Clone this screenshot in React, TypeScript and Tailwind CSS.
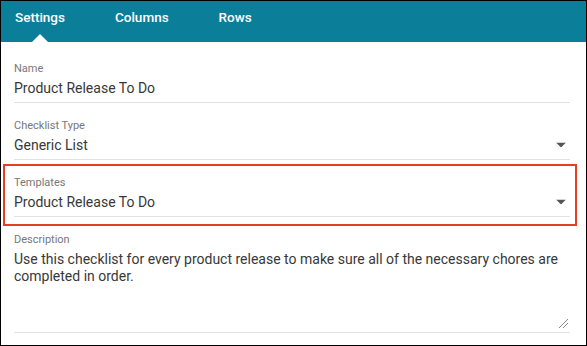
import React from "react";

const tabs = ["Settings", "Columns", "Rows"];

const Caret: React.FC = () => (
  <svg width="10" height="5" viewBox="0 0 10 5" className="absolute right-[4px] top-1/2 -translate-y-1/2">
    <path d="M0 0 L10 0 L5 5 Z" fill="#555" />
  </svg>
);

interface FieldProps {
  label: string;
  value: string;
  select?: boolean;
  highlight?: boolean;
}

const Field: React.FC<FieldProps> = ({ label, value, select, highlight }) => {
  return (
    <div className="relative pt-[16px] pb-[4px] border-b border-[#e2e2e2]">
      {highlight && (
        <div className="absolute top-[4px] bottom-[-10px] left-[-11px] right-[-7px] border-2 border-[#e2411d] pointer-events-none"></div>
      )}
      <div className="text-[11px] leading-[13px] text-[#777]">{label}</div>
      <div className="relative mt-[3px] text-[14px] leading-[20px] text-[#383838]">
        {value}
        {select && <Caret />}
      </div>
    </div>
  );
};

export default function App() {
  return (
    <div
      className="w-[587px] h-[346px] border border-black bg-white overflow-hidden flex flex-col"
      style={{ fontFamily: "Roboto, 'Liberation Sans', sans-serif" }}
    >
      <div className="relative h-[41px] shrink-0 bg-[#0b7e9a] flex items-center pl-[14px] pb-[8px] gap-[50px]">
        {tabs.map((t) => (
          <span key={t} className="text-[13.5px] font-medium text-white">
            {t}
          </span>
        ))}
        <div className="absolute bottom-0 left-[31px] w-0 h-0 border-l-[8px] border-r-[8px] border-b-[8px] border-l-transparent border-r-transparent border-b-white"></div>
      </div>

      <div className="flex-1 pt-[4px] pl-[13px] pr-[16px] flex flex-col">
        <Field label="Name" value="Product Release To Do" />
        <Field label="Checklist Type" value="Generic List" select />
        <Field label="Templates" value="Product Release To Do" select highlight />
        <div className="relative pt-[16px] h-[116px] border-b border-[#e2e2e2]">
          <div className="text-[11px] leading-[13px] text-[#777]">Description</div>
          <p className="mt-[5px] text-[14px] leading-[17px] text-[#383838]">
            Use this checklist for every product release to make sure all of the necessary chores are completed in order.
          </p>
          <svg width="10" height="9" viewBox="0 0 10 9" className="absolute right-[1px] bottom-[4px]">
            <path d="M9 0 L0 9 M9 4 L4 9" stroke="#888" strokeWidth="1" />
          </svg>
        </div>
      </div>
    </div>
  );
}
